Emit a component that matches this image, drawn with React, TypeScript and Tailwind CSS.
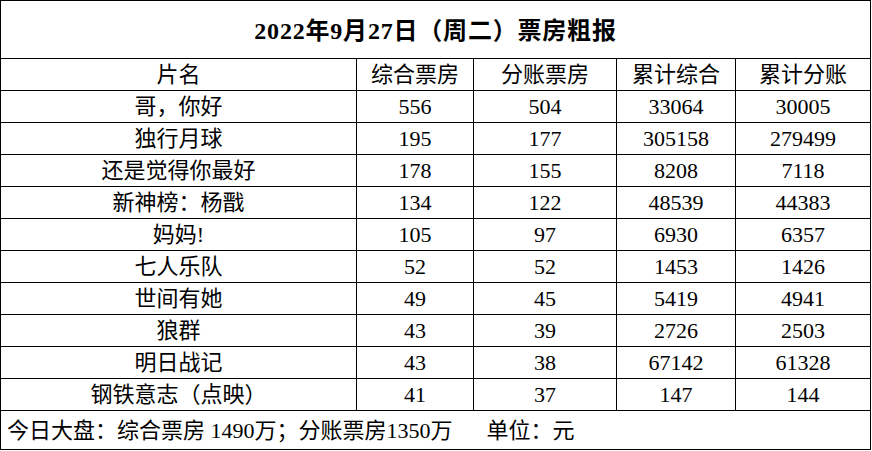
const rows: [string, string, string, string, string][] = [
  ["哥，你好", "556", "504", "33064", "30005"],
  ["独行月球", "195", "177", "305158", "279499"],
  ["还是觉得你最好", "178", "155", "8208", "7118"],
  ["新神榜：杨戬", "134", "122", "48539", "44383"],
  ["妈妈!", "105", "97", "6930", "6357"],
  ["七人乐队", "52", "52", "1453", "1426"],
  ["世间有她", "49", "45", "5419", "4941"],
  ["狼群", "43", "39", "2726", "2503"],
  ["明日战记", "43", "38", "67142", "61328"],
  ["钢铁意志（点映）", "41", "37", "147", "144"],
];

const header = ["片名", "综合票房", "分账票房", "累计综合", "累计分账"];

function Cell({ text, last }: { text: string; last: boolean }) {
  return (
    <div
      className={
        "h-[32px] flex items-center justify-center border-b border-black " +
        (last ? "" : "border-r")
      }
    >
      {text}
    </div>
  );
}

export default function App() {
  return (
    <div className="w-[872px] h-[451px] bg-white">
      <div
        className="w-[871px] h-[450px] border border-black text-black text-[22px] leading-none flex flex-col"
        style={{ fontFamily: '"Liberation Serif", "Noto Sans CJK SC", serif' }}
      >
        <div className="h-[58px] shrink-0 flex items-center justify-center border-b border-black pt-[3px] text-[24px] tracking-[0.8px] font-bold">
          2022年9月27日（周二）票房粗报
        </div>
        <div className="grid grid-cols-[356px_117px_143px_119px_134px]">
          {header.map((h, i) => (
            <Cell key={h} text={h} last={i === 4} />
          ))}
          {rows.map((r) =>
            r.map((c, i) => <Cell key={r[0] + i} text={c} last={i === 4} />)
          )}
        </div>
        <div className="flex-1 flex items-center pl-[6px] pt-[2px]">
          <span>今日大盘：综合票房 1490万；分账票房1350万</span>
          <span className="ml-[34px]">单位：元</span>
        </div>
      </div>
    </div>
  );
}
